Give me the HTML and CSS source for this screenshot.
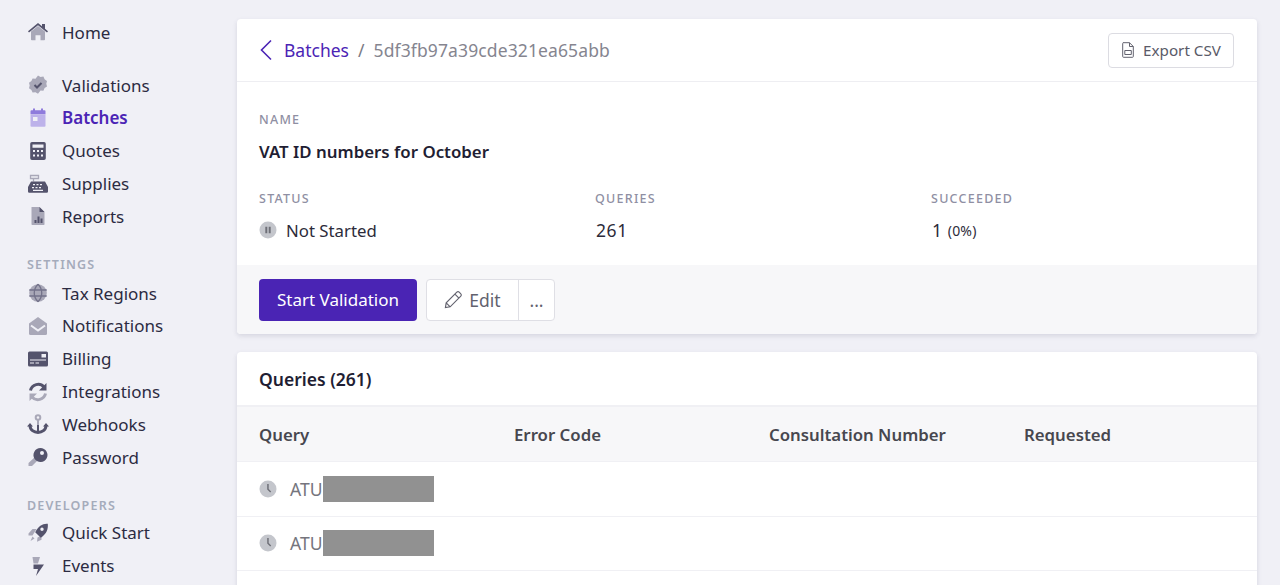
FILE: index.html
```html
<!DOCTYPE html>
<html lang="en">
<head>
<meta charset="utf-8">
<title>Batch</title>
<link rel="stylesheet" href="styles.css">
</head>
<body>
<div class="app">
  <nav class="sidebar">
    <a class="nav-item home"><svg class="ico" viewBox="0 0 22 20"><path class="lt" d="M4 9.500 11 4l7 5.500V17.500a.8.8 0 0 1-.8.8H13.500v-5h-5v5H4.800a.8.8 0 0 1-.8-.8z"/><path class="dk" d="M1 9.200 11 1l4 3.300V2h3v4.800l3 2.400-1 1.300L11 3.300 2 10.500z"/></svg><span>Home</span></a>
    <div class="group">
      <a class="nav-item"><svg class="ico" viewBox="0 0 22 20"><path class="lt" d="M11 .8l2.500 1.500 2.900-.3 1.200 2.700 2.400 1.600-.7 2.800.7 2.800-2.400 1.600-1.200 2.700-2.900-.3L11 19.200l-2.500-1.500-2.900.3-1.200-2.700L2 13.700l.7-2.800L2 8.100l2.400-1.600L5.600 3.800l2.900.3z" transform="translate(0 -.4)"/><path class="stroke-dk" d="M7.500 10l2.500 2.500 4.500-4.500"/></svg><span>Validations</span></a>
      <a class="nav-item active"><svg class="ico" viewBox="0 0 22 20"><path class="p-lt" d="M3.500 6.500h15v11.300a1 1 0 0 1-1 1h-13a1 1 0 0 1-1-1z"/><path class="p-dk" d="M3.500 3.200a1 1 0 0 1 1-1H6V.5h2v1.700h6V.5h2v1.700h1.500a1 1 0 0 1 1 1v3h-15z"/><rect x="6" y="9" width="4.500" height="4" fill="#f0f0f6"/></svg><span>Batches</span></a>
      <a class="nav-item"><svg class="ico" viewBox="0 0 22 20"><path class="dk" fill-rule="evenodd" d="M5 1h12a1.800 1.800 0 0 1 1.800 1.800v14.400A1.800 1.800 0 0 1 17 19H5a1.800 1.800 0 0 1-1.800-1.800V2.800A1.800 1.800 0 0 1 5 1zm.5 2.500v3.200h11V3.500zM6 9v2h2V9zm4 0v2h2V9zm4 0v2h2V9zM6 13.500v2h2v-2zm4 0v2h2v-2zm4 0v2h2v-2z"/></svg><span>Quotes</span></a>
      <a class="nav-item"><svg class="ico" viewBox="0 0 22 20"><path class="stroke-lt thin" d="M3.500 1.500h8v3h-8zM6.500 4.500v3"/><path class="dk" fill-rule="evenodd" d="M4 7.500h14l3 5.500v4.500a1.300 1.300 0 0 1-1.300 1.300H2.300A1.300 1.300 0 0 1 1 17.500V13zm2 2.500v1.200h2V10zm3.500 0v1.200h2V10zm3.500 0v1.200h2V10zM5 13v1.200h2V13zm3.500 0v1.200h2V13zm3.500 0v1.200h2V13zM6 15.800V17h10v-1.200z"/></svg><span>Supplies</span></a>
      <a class="nav-item"><svg class="ico" viewBox="0 0 22 20"><path class="lt" d="M4.500 1h8l5 5v12.200a.8.800 0 0 1-.8.800H5.300a.8.800 0 0 1-.8-.8z"/><path class="dk" d="M12.500 1l5 5h-5zM7.500 14h2v3h-2zM10.500 10.500h2V17h-2zM13.500 12.500h2V17h-2z"/></svg><span>Reports</span></a>
    </div>
    <div class="group-label">SETTINGS</div>
    <a class="nav-item"><svg class="ico" viewBox="0 0 22 20"><circle class="lt" cx="11" cy="10" r="8.800"/><path class="stroke-mid thin" d="M2.300 7h17.400M2.300 13h17.400M11 1.200c-5 5-5 12.600 0 17.600M11 1.200c5 5 5 12.600 0 17.600"/></svg><span>Tax Regions</span></a>
    <a class="nav-item"><svg class="ico" viewBox="0 0 22 20"><path class="lt" d="M2 7.500 11 1l9 6.500v10a1.500 1.500 0 0 1-1.500 1.500h-15A1.500 1.500 0 0 1 2 17.500z"/><path class="stroke-bg" d="M4 9.500l7 5 7-5"/></svg><span>Notifications</span></a>
    <a class="nav-item"><svg class="ico" viewBox="0 0 22 20"><path class="dk" fill-rule="evenodd" d="M2.500 2.500h17A1.500 1.500 0 0 1 21 4v12a1.500 1.500 0 0 1-1.500 1.500h-17A1.500 1.500 0 0 1 1 16V4a1.500 1.500 0 0 1 1.500-1.500zM14.500 5v3.500H19V5zM3 10.500v1h16v-1zM3 13.500v1h4v-1zm5.500 0v1h3.500v-1z"/></svg><span>Billing</span></a>
    <a class="nav-item"><svg class="ico" viewBox="0 0 22 20"><path class="stroke-dk wide" d="M3.500 8.500A7.800 7.800 0 0 1 17 5"/><path class="dk" d="M19.500 1v7.500H12z"/><path class="stroke-lt wide" d="M18.500 11.500A7.800 7.800 0 0 1 5 15"/><path class="lt" d="M2.500 19v-7.500H10z"/></svg><span>Integrations</span></a>
    <a class="nav-item"><svg class="ico" viewBox="0 0 22 20"><circle class="stroke-lt" cx="11" cy="3.500" r="2.300"/><path class="stroke-lt" d="M11 6v6"/><path class="stroke-dk wide" d="M3 11.500c0 4.500 4 7 8 7s8-2.500 8-7"/><path class="dk" d="M0 12.500l3-3.500 3 3.500zM16 12.500l3-3.500 3 3.500zM10 11h2v7h-2z"/></svg><span>Webhooks</span></a>
    <a class="nav-item"><svg class="ico" viewBox="0 0 22 20"><path class="lt" d="M9 9l3 3-6.500 6.500a1.500 1.500 0 0 1-1.500.5H1.500v-3z"/><path class="dk" fill-rule="evenodd" d="M13.500 1a7 7 0 1 1-5.800 10.900A7 7 0 0 1 13.500 1zm1.500 3a2 2 0 1 0 0 4 2 2 0 0 0 0-4z"/></svg><span>Password</span></a>
    <div class="group-label dev">DEVELOPERS</div>
    <a class="nav-item"><svg class="ico" viewBox="0 0 22 20"><path class="lt" d="M1.500 10.500l4-4.500h4l-4 6.500H1.500zM10 18.800l.5-4.300 4-2v4.300z"/><path class="dk" fill-rule="evenodd" d="M20.800.8c.5 5.200-1 10-7 14l-5.600-5.600C11.500 3 15.800.3 20.800.8zM15 4.500a1.700 1.700 0 1 0 0 3.400 1.700 1.700 0 0 0 0-3.400z"/><path class="lt" d="M5.500 13.500l2 2-4 2.500z"/></svg><span>Quick Start</span></a>
    <a class="nav-item"><svg class="ico" viewBox="0 0 22 20"><path class="lt" d="M5.500 1h7.500l-2 6.500H6.500z"/><path class="dk" d="M6.500 8.500H17L9 20l2-7H6.500z"/></svg><span>Events</span></a>
  </nav>
  <main class="main">
    <section class="card summary">
      <header class="crumb-bar">
        <div class="crumbs">
          <svg class="back" viewBox="0 0 14 22"><path d="M12 1.500 2.500 11l9.500 9.500"/></svg>
          <a class="crumb-link">Batches</a>
          <span class="crumb-sep">/</span>
          <span class="crumb-id">5df3fb97a39cde321ea65abb</span>
        </div>
        <button class="btn-export"><svg class="csv" viewBox="0 0 14 16"><path d="M2 .7h6.500L12.300 4.500v10a.8.800 0 0 1-.8.800h-9a.8.800 0 0 1-.8-.8V1.500A.8.800 0 0 1 2 .7zM8.500.7v3.800h3.800"/><path d="M3.800 8.500h6.500v4H3.800z"/></svg>Export CSV</button>
      </header>
      <div class="details">
        <div class="label">NAME</div>
        <div class="batch-name">VAT ID numbers for October</div>
        <div class="stats">
          <div>
            <div class="label">STATUS</div>
            <div class="value"><svg class="status-ico" viewBox="0 0 18 18"><circle cx="9" cy="9" r="8.500" fill="#c4c6cc"/><path d="M6.300 5.700h2v6.600h-2zM9.700 5.700h2v6.600h-2z" fill="#6f7078"/></svg>Not Started</div>
          </div>
          <div>
            <div class="label">QUERIES</div>
            <div class="value num">261</div>
          </div>
          <div>
            <div class="label">SUCCEEDED</div>
            <div class="value num">1 <small>(0%)</small></div>
          </div>
        </div>
      </div>
      <footer class="actions">
        <button class="btn-primary">Start Validation</button>
        <div class="btn-group">
          <button class="btn-edit"><svg class="pencil" viewBox="0 0 20 20"><path d="M13.500 2.300a1.800 1.800 0 0 1 2.500 0l1.700 1.700a1.800 1.800 0 0 1 0 2.500L6.500 17.700 1.500 18.500l.8-5zM11.500 4.300l4.200 4.200M2.300 13.500l4.200 4.200"/></svg>Edit</button>
          <button class="btn-more">...</button>
        </div>
      </footer>
    </section>
    <section class="card queries">
      <h2 class="queries-title">Queries (261)</h2>
      <div class="row head">
        <div>Query</div><div>Error Code</div><div>Consultation Number</div><div>Requested</div>
      </div>
      <div class="row">
        <div class="query"><svg class="status-ico" viewBox="0 0 18 18"><circle cx="9" cy="9" r="8.500" fill="#c4c6cc"/><path d="M8.200 4h1.500v5l2.500 2.500-1 .9-3-3z" fill="#6f7078"/></svg><span class="atu">ATU</span><span class="redact"></span></div>
      </div>
      <div class="row">
        <div class="query"><svg class="status-ico" viewBox="0 0 18 18"><circle cx="9" cy="9" r="8.500" fill="#c4c6cc"/><path d="M8.200 4h1.500v5l2.500 2.500-1 .9-3-3z" fill="#6f7078"/></svg><span class="atu">ATU</span><span class="redact"></span></div>
      </div>
      <div class="row"></div>
    </section>
  </main>
</div>
</body>
</html>
```
FILE: styles.css
```css
* { box-sizing: border-box; }
html, body { margin: 0; height: 585px; overflow: hidden; }
body {
  background: #f0f0f6;
  font-family: "Noto Sans", "Open Sans", sans-serif;
  color: #2c2b42;
  font-size: 18px;
}
.app { display: flex; height: 585px; overflow: hidden; }

.sidebar { width: 237px; flex: none; padding: 16px 0 0 27px; display: flex; flex-direction: column; }
.nav-item { display: flex; align-items: center; height: 32.8px; flex: none; font-size: 17px; line-height: 1; }
.nav-item span { margin-left: 13px; }
.ico { width: 22px; height: 20px; flex: none; overflow: visible; }
.home { margin-bottom: 20px; }
.group { display: flex; flex-direction: column; }
.active { color: #4b24b5; font-weight: 600; }
.lt { fill: #a9a8b8; }
.dk { fill: #54536c; }
.p-lt { fill: #bdb2ea; }
.p-dk { fill: #8f7bdc; }
.stroke-dk, .stroke-lt, .stroke-bg, .stroke-mid { fill: none; stroke-width: 2; }
.stroke-dk { stroke: #54536c; }
.stroke-mid { stroke: #73728a; }
.stroke-lt { stroke: #a9a8b8; }
.stroke-bg { stroke: #f0f0f6; }
.thin { stroke-width: 1.300; }
.wide { stroke-width: 3; }
.group-label { font-size: 12.500px; font-weight: 600; letter-spacing: 1.200px; color: #a5abbb; height: 18px; line-height: 18px; margin: 23px 0 3px; flex: none; }
.dev { margin: 23px 0 2px; }

.main { width: 1020px; flex: none; padding-top: 19px; }
.card { background: #fff; border-radius: 4px; box-shadow: 0 2px 5px rgba(60, 60, 90, .14); overflow: hidden; }
.summary { height: 315px; margin-bottom: 18px; display: flex; flex-direction: column; }
.crumb-bar { height: 63px; flex: none; border-bottom: 1px solid #eeeef2; display: flex; align-items: center; justify-content: space-between; padding: 0 23px 0 22px; }
.crumbs { display: flex; align-items: center; font-size: 17.500px; }
.back { width: 14px; height: 22px; fill: none; stroke: #4b24b5; stroke-width: 1.600; margin-right: 11px; }
.crumb-link { color: #4b24b5; }
.crumb-sep { color: #7a7a85; margin: 0 9px; }
.crumb-id { color: #85858f; letter-spacing: .12px; }
.btn-export { height: 35px; width: 126px; background: #fff; border: 1px solid #dcdce2; border-radius: 4px; color: #5a5a68; font: inherit; font-size: 15.200px; display: flex; align-items: center; justify-content: center; padding: 0; }
.csv { width: 14px; height: 16px; margin-right: 8px; fill: none; stroke: #62626e; stroke-width: 1; }

.details { flex: 1; padding: 30px 22px 0; }
.label { font-size: 12.500px; font-weight: 500; letter-spacing: 1.250px; color: #8f8fa3; line-height: 16px; }
.batch-name { font-size: 16.850px; font-weight: 600; color: #1f1e33; margin-top: 12px; line-height: 24px; }
.stats { display: grid; grid-template-columns: repeat(3, 336px); margin-top: 27px; }
.value { display: flex; align-items: center; margin-top: 10px; height: 26px; font-size: 16.800px; color: #2c2b3a; white-space: pre; }
.num { font-size: 17.500px; letter-spacing: .6px; padding-left: 1px; }
.value small { font-size: 14px; letter-spacing: .2px; }
.status-ico { width: 18px; height: 18px; margin-right: 9px; flex: none; }

.actions { height: 69px; flex: none; background: #f7f7f9; display: flex; align-items: center; padding: 0 22px; }
.btn-primary { width: 158px; height: 42px; background: #4a24b4; border: 0; border-radius: 4px; color: #fff; font: inherit; font-size: 17px; padding: 0; }
.btn-group { display: flex; margin-left: 9px; height: 42px; background: #fff; border: 1px solid #dfdfe5; border-radius: 4px; }
.btn-edit, .btn-more { background: none; border: 0; font: inherit; font-size: 17.500px; color: #62626e; padding: 0; display: flex; align-items: center; justify-content: center; }
.btn-edit { width: 92px; border-right: 1px solid #dfdfe5; }
.btn-more { width: 35px; }
.pencil { width: 19px; height: 19px; margin-right: 6px; fill: none; stroke: #62626e; stroke-width: 1.200; }

.queries { height: 240px; }
.queries-title { margin: 0; height: 55px; display: flex; align-items: center; padding: 0 22px; font-size: 17.500px; font-weight: 600; color: #1f1e33; border-bottom: 2px solid #f0f0f4; }
.row { display: grid; grid-template-columns: repeat(4, 255px); height: 54.500px; align-items: center; padding: 0 22px; border-bottom: 1px solid #f0f0f4; }
.head { height: 55px; background: #f7f7f9; font-weight: 600; font-size: 16.800px; color: #47474f; }
.query { display: flex; align-items: center; color: #75757d; font-size: 17.500px; grid-column: 1 / -1; }
.query .status-ico { margin-right: 13px; }
.redact { width: 111px; height: 26px; margin-left: 1px; background: #919191; }
```
